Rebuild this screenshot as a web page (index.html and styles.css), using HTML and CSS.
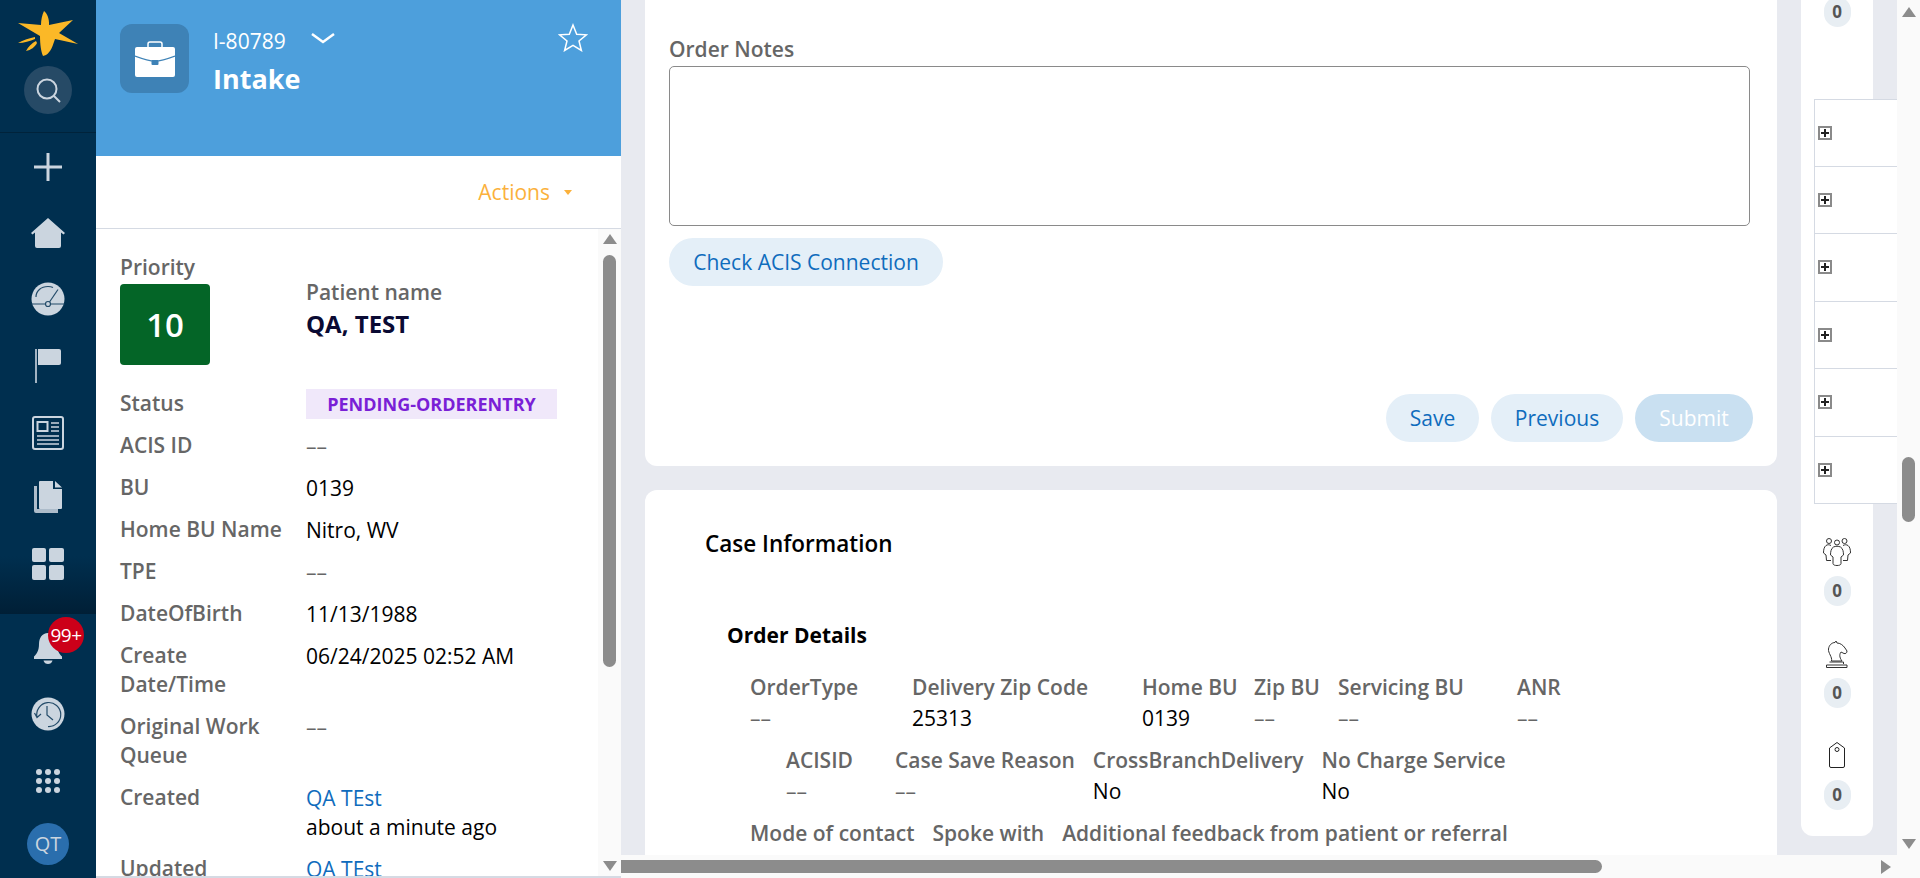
FILE: index.html
```html
<!DOCTYPE html>
<html lang="en">
<head>
	<meta charset="UTF-8">
	<title>Intake I-80789</title>
	<link rel="stylesheet" href="styles.css">
</head>
<body>
<div class="page">
	<nav class="rail">
		<div class="rail-top">
			<svg class="logo" width="60" height="46" viewBox="18 11 60 46"><path fill="#fbb827" d="M44 11C47 13 49.500 19 49 25L73 20L59 33L78 44L55 39C53 45 51 52 46 55L43 56C41 52 40 44 40 36L18 23L41 25C41 20 42 15 44 11Z"/><path fill="#fbb827" d="M18 43C23 40 30 38 35 37L35 39C30 41 24 43 18 43ZM26 51C28 47 32 43 36 41L37 43C35 47 31 50 26 51Z"/></svg>
			<div class="search-btn">
				<svg width="26" height="26" viewBox="0 0 26 26" fill="none" stroke="#cbd5df" stroke-width="2"><circle cx="12" cy="12" r="9.500"/><path d="M19 19L25 25"/></svg>
			</div>
		</div>
		<div class="rail-menu">
			<svg class="nav-icon" width="28" height="28" viewBox="0 0 28 28" fill="#cbd5df"><path d="M12.500 0h3v12.500H28v3H15.500V28h-3V15.500H0v-3h12.500z"/></svg>
			<svg class="nav-icon" width="34" height="30" viewBox="0 0 34 30" fill="#cbd5df"><path d="M17 0L34 15L32.500 16.500L30 14.500V28a2 2 0 0 1-2 2H6a2 2 0 0 1-2-2V14.500L1.500 16.500L0 15Z"/></svg>
			<svg class="nav-icon" width="34" height="34" viewBox="0 0 34 34"><circle cx="17" cy="17" r="16.500" fill="#cbd5df"/><path d="M5 15C5 9 10 4.500 17 4.500C19 4.500 21 5 22 5.500M0.500 22H14.500M19.500 22H33.500" fill="none" stroke="#234b69" stroke-width="1.200"/><path d="M18.500 20L27 7.500" stroke="#234b69" stroke-width="1.200"/><circle cx="17" cy="22" r="2.500" fill="#cbd5df" stroke="#234b69" stroke-width="1.200"/></svg>
			<svg class="nav-icon" width="26" height="34" viewBox="0 0 26 34" fill="#cbd5df"><rect x="0" y="0" width="2" height="34" opacity=".8"/><path d="M3 0H24a2 2 0 0 1 2 2V14a2 2 0 0 1-2 2H3Z"/></svg>
			<svg class="nav-icon" width="32" height="34" viewBox="0 0 32 34" fill="none" stroke="#cbd5df" stroke-width="2"><rect x="1" y="1" width="30" height="32" rx="2"/><rect x="5.500" y="6" width="10" height="9"/><path d="M19 7H27M19 11H27M19 15H27M5 20H27M5 24H27M5 28H27" stroke-width="1.500"/></svg>
			<svg class="nav-icon" width="28" height="32" viewBox="0 0 28 32" fill="#cbd5df"><path d="M0 5H3V28H24V32H2a2 2 0 0 1-2-2Z" opacity=".85"/><path d="M6 0H19V8H28V27a1 1 0 0 1-1 1H6a1 1 0 0 1-1-1V1a1 1 0 0 1 1-1Z"/><path d="M21 0L28 6.500H21Z"/></svg>
			<svg class="nav-icon" width="32" height="32" viewBox="0 0 32 32" fill="#cbd5df"><rect width="14" height="14" rx="2"/><rect x="17" width="15" height="14" rx="2"/><rect y="17" width="14" height="15" rx="2"/><rect x="17" y="17" width="15" height="15" rx="2"/></svg>
		</div>
		<div class="rail-bottom">
			<div class="bell-wrap">
				<svg width="28" height="31" viewBox="0 0 28 31" fill="#cbd5df"><path d="M14 0C20 0 23 5 23 11C23 17 25 21 28 23.500V26H0V23.500C3 21 5 17 5 11C5 5 8 0 14 0Z"/><path d="M9.500 27.500H18.500C18 30 16 31 14 31C12 31 10 30 9.500 27.500Z"/></svg>
				<span class="bell-badge">99+</span>
			</div>
			<svg class="history" width="34" height="34" viewBox="0 0 34 34"><circle cx="17" cy="17" r="16.500" fill="#cbd5df"/><path d="M6 20A12 12 0 1 1 17 29.500M3.500 16L6 20.500L10 17M16 9V18L22 23" fill="none" stroke="#234b69" stroke-width="1.200"/></svg>
			<div class="dots"><i></i><i></i><i></i><i></i><i></i><i></i><i></i><i></i><i></i></div>
			<div class="avatar">QT</div>
		</div>
	</nav>

	<aside class="panel">
		<header class="case-head">
			<div class="case-icon">
				<svg width="40" height="36" viewBox="0 0 40 36"><path d="M13 7V3a2 2 0 0 1 2-2H25a2 2 0 0 1 2 2V7" fill="none" stroke="#fff" stroke-width="1.500"/><rect y="6" width="40" height="30" rx="2" fill="#fff"/><path d="M0 15C8 18 14 20 20 20C26 20 32 18 40 15" fill="none" stroke="#3e82b6" stroke-width="1.200"/><rect x="16.500" y="19" width="7" height="5" rx="1" fill="#3e82b6"/></svg>
			</div>
			<div class="case-title">
				<div class="case-id-row">
					<span class="case-id">I-80789</span>
					<svg width="24" height="12" viewBox="0 0 24 12" fill="none" stroke="#fff" stroke-width="2.500"><path d="M1 2L12 10L23 2"/></svg>
				</div>
				<div class="case-name">Intake</div>
			</div>
			<svg class="star" width="30" height="29" viewBox="0 0 30 29" fill="none" stroke="#fff" stroke-width="1.500"><path d="M15 2L18.700 11.200L28.500 11.800L21 18L23.400 27.500L15 22.300L6.600 27.500L9 18L1.500 11.800L11.300 11.200Z"/></svg>
		</header>
		<div class="actions-bar">
			<span class="actions">Actions</span>
			<span class="caret"></span>
		</div>
		<div class="panel-body">
			<div class="details">
				<div class="top-block">
					<div class="priority">
						<div class="label">Priority</div>
						<div class="priority-box">10</div>
					</div>
					<div class="patient">
						<div class="label">Patient name</div>
						<div class="patient-name">QA, TEST</div>
					</div>
				</div>
				<div class="row row-status"><div class="label">Status</div><div class="status">PENDING-ORDERENTRY</div></div>
				<div class="row"><div class="label">ACIS ID</div><div class="value empty">––</div></div>
				<div class="row"><div class="label">BU</div><div class="value">0139</div></div>
				<div class="row"><div class="label">Home BU Name</div><div class="value">Nitro, WV</div></div>
				<div class="row"><div class="label">TPE</div><div class="value empty">––</div></div>
				<div class="row"><div class="label">DateOfBirth</div><div class="value">11/13/1988</div></div>
				<div class="row"><div class="label">Create<br>Date/Time</div><div class="value">06/24/2025 02:52 AM</div></div>
				<div class="row"><div class="label">Original Work<br>Queue</div><div class="value empty">––</div></div>
				<div class="row"><div class="label">Created</div><div class="value"><a class="link">QA TEst</a><br>about a minute ago</div></div>
				<div class="row"><div class="label">Updated</div><div class="value"><a class="link">QA TEst</a></div></div>
			</div>
			<div class="vbar vbar-panel">
				<span class="arrow-up"></span>
				<span class="thumb-v thumb-panel"></span>
				<span class="arrow-down"></span>
			</div>
		</div>
	</aside>

	<main class="main">
		<div class="main-left">
			<div class="view">
				<div class="content">
					<section class="card card-form">
						<div class="notes-label">Order Notes</div>
						<div class="notes"></div>
						<button class="btn btn-check">Check ACIS Connection</button>
						<div class="form-buttons">
							<button class="btn btn-save">Save</button>
							<button class="btn btn-prev">Previous</button>
							<button class="btn btn-submit">Submit</button>
						</div>
					</section>
					<section class="card card-case">
						<h2 class="case-info">Case Information</h2>
						<h3 class="order-details">Order Details</h3>
						<div class="fields">
							<div class="field w-order"><div class="f-label">OrderType</div><div class="f-value empty">––</div></div>
							<div class="field w-zip"><div class="f-label">Delivery Zip Code</div><div class="f-value">25313</div></div>
							<div class="field w-home"><div class="f-label">Home BU</div><div class="f-value">0139</div></div>
							<div class="field w-zipbu"><div class="f-label">Zip BU</div><div class="f-value empty">––</div></div>
							<div class="field w-serv"><div class="f-label">Servicing BU</div><div class="f-value empty">––</div></div>
							<div class="field"><div class="f-label">ANR</div><div class="f-value empty">––</div></div>
						</div>
						<div class="fields fields-inset">
							<div class="field w-acis"><div class="f-label">ACISID</div><div class="f-value empty">––</div></div>
							<div class="field"><div class="f-label">Case Save Reason</div><div class="f-value empty">––</div></div>
							<div class="field"><div class="f-label">CrossBranchDelivery</div><div class="f-value">No</div></div>
							<div class="field"><div class="f-label">No Charge Service</div><div class="f-value">No</div></div>
						</div>
						<div class="fields">
							<div class="field"><div class="f-label">Mode of contact</div></div>
							<div class="field"><div class="f-label">Spoke with</div></div>
							<div class="field"><div class="f-label">Additional feedback from patient or referral</div></div>
						</div>
					</section>
				</div>
				<aside class="side">
					<div class="count count-first">0</div>
					<div class="expand-list">
						<div class="expand-row"><span class="plus"></span></div>
						<div class="expand-row"><span class="plus"></span></div>
						<div class="expand-row"><span class="plus"></span></div>
						<div class="expand-row"><span class="plus"></span></div>
						<div class="expand-row"><span class="plus"></span></div>
						<div class="expand-row"><span class="plus"></span></div>
					</div>
					<svg class="side-icon people" width="28" height="28" viewBox="0 0 28 28" fill="none" stroke="#333" stroke-width="1"><circle cx="6" cy="3" r="2.500"/><circle cx="14" cy="4.500" r="2.500"/><circle cx="21.500" cy="3" r="2.500"/><path d="M8 7.500C6 6.500 4.500 6.500 3 7.500C1 9 .5 12 .5 15L3 17L3.500 22.500H8M20 7.500C22 6.500 23.500 6.500 25 7.500C27 9 27.500 12 27.500 15L25 17L24.500 22.500H20"/><path d="M10.500 9C12.500 8 15.500 8 17.500 9C20 10.500 20.500 14 20.500 17L18 19V25.500C18 27 16 27.500 14 27.500C12 27.500 10 27 10 25.500V19L7.500 17C7.500 14 8 10.500 10.500 9Z"/></svg>
					<div class="count">0</div>
					<svg class="side-icon knight" width="22" height="28" viewBox="0 0 22 28" fill="none" stroke="#333" stroke-width="1"><path d="M10 1L11 3C14 3 17 5 19 8L21 11C21 13 19.500 14 18 13.500L15 12C13.500 14 13 17 16 21H5.500C6.500 17 2 13 2.500 9C3 5 6 2.500 9 2.500Z"/><path d="M3.500 22H17.500V24M.5 25H21V27.500H.5Z"/></svg>
					<div class="count">0</div>
					<svg class="side-icon tag" width="16" height="26" viewBox="0 0 16 26" fill="none" stroke="#222" stroke-width="1"><path d="M8 .5L15.500 6V24a1.500 1.500 0 0 1-1.500 1.500H2A1.500 1.500 0 0 1 .5 24V6Z"/><circle cx="8" cy="7.500" r="2"/></svg>
					<div class="count">0</div>
				</aside>
			</div>
			<div class="hbar">
				<span class="thumb-h"></span>
				<span class="arrow-right"></span>
			</div>
		</div>
		<div class="vbar vbar-main">
			<span class="arrow-up"></span>
			<span class="thumb-v thumb-main"></span>
			<span class="arrow-down"></span>
		</div>
	</main>
</div>
</body>
</html>
```

FILE: styles.css
```css
* {
	box-sizing: border-box;
}
html, body {
	margin: 0;
	height: 100%;
	overflow: hidden;
}
body {
	font-family: "Open Sans", "Noto Sans", sans-serif;
	font-size: 21px;
	line-height: 29px;
	color: #000;
	background: #fff;
}
svg {
	display: block;
	flex: none;
}
.page {
	display: flex;
	width: 1920px;
	height: 878px;
}

/* left nav */
.rail {
	width: 96px;
	flex: none;
	display: flex;
	flex-direction: column;
	background: #002f4f;
}
.rail-top {
	height: 133px;
	display: flex;
	flex-direction: column;
	align-items: center;
	padding-top: 11px;
	border-bottom: 1px solid #00233b;
}
.search-btn {
	width: 48px;
	height: 48px;
	margin-top: 9px;
	border-radius: 50%;
	background: #264a66;
	display: flex;
	align-items: center;
	justify-content: center;
}
.rail-menu {
	height: 481px;
	display: flex;
	flex-direction: column;
	align-items: center;
	background: linear-gradient(#002f4f 88%, #001f36);
	padding-top: 20px;
}
.nav-icon:nth-child(1) {
	margin-bottom: 37px;
}
.nav-icon:nth-child(2) {
	margin-bottom: 34px;
}
.nav-icon:nth-child(3),
.nav-icon:nth-child(4) {
	margin-bottom: 33px;
}
.nav-icon:nth-child(5) {
	margin-bottom: 31px;
}
.nav-icon:nth-child(6) {
	margin-bottom: 35px;
}
.rail-bottom {
	flex: 1;
	display: flex;
	flex-direction: column;
	align-items: center;
	padding-top: 19px;
}
.bell-wrap {
	position: relative;
	width: 28px;
	height: 31px;
}
.bell-badge {
	position: absolute;
	left: 14px;
	top: -16px;
	width: 36px;
	height: 36px;
	border-radius: 50%;
	background: #cc0019;
	color: #fff;
	font-size: 19px;
	line-height: 36px;
	text-align: center;
	letter-spacing: -0.5px;
}
.history {
	margin-top: 33px;
}
.dots {
	margin-top: 38px;
	width: 24px;
	display: grid;
	grid-template-columns: repeat(3, 6px);
	gap: 3px;
}
.dots i {
	width: 6px;
	height: 6px;
	border-radius: 50%;
	background: #cbd5df;
}
.avatar {
	margin-top: 30px;
	width: 42px;
	height: 42px;
	border-radius: 50%;
	background: #2a6ead;
	color: #cbd5df;
	font-size: 20px;
	line-height: 42px;
	text-align: center;
}

/* case panel */
.panel {
	width: 525px;
	flex: none;
	display: flex;
	flex-direction: column;
	border-bottom: 2px solid #d5dae3;
}
.case-head {
	height: 156px;
	flex: none;
	display: flex;
	background: #4d9fdc;
	padding: 24px 33px 0 24px;
	color: #fff;
}
.case-icon {
	width: 69px;
	height: 69px;
	border-radius: 12px;
	background: #3e82b6;
	display: flex;
	align-items: center;
	justify-content: center;
}
.case-title {
	margin-left: 24px;
	flex: 1;
}
.case-id-row {
	display: flex;
	align-items: flex-start;
	gap: 25px;
	line-height: 28px;
	margin-top: 3px;
}
.case-id {
	font-size: 21px;
}
.case-id-row svg {
	margin-top: 5px;
}
.case-name {
	font-size: 27px;
	font-weight: 700;
	line-height: 36px;
	margin-top: 6px;
}
.star {
	margin-top: -1px;
}
.actions-bar {
	height: 73px;
	flex: none;
	display: flex;
	align-items: center;
	justify-content: flex-end;
	padding: 0 49px 0 0;
	border-bottom: 1px solid #d5dae3;
}
.actions {
	color: #fbb13c;
	font-size: 21px;
}
.caret {
	margin-left: 14px;
	border-top: 5px solid #fbb13c;
	border-left: 4px solid transparent;
	border-right: 4px solid transparent;
}
.panel-body {
	flex: 1;
	min-height: 0;
	display: flex;
	overflow: hidden;
}
.details {
	flex: 1;
	padding: 24px 0 0 24px;
	overflow: hidden;
}
.label {
	color: #666;
	font-weight: 600;
}
.top-block {
	display: flex;
}
.priority {
	width: 186px;
	flex: none;
}
.priority-box {
	width: 90px;
	height: 81px;
	margin-top: 2px;
	border-radius: 4px;
	background: #046527;
	color: #fff;
	font-size: 33px;
	font-weight: 600;
	line-height: 81px;
	text-align: center;
}
.patient {
	padding-top: 25px;
}
.patient-name {
	font-size: 24px;
	font-weight: 700;
	color: #0a0a33;
	line-height: 32px;
	margin-top: 1px;
}
.row {
	display: flex;
	margin-top: 13px;
}
.row-status {
	margin-top: 23px;
	align-items: center;
	height: 30px;
}
.row .label {
	width: 186px;
	flex: none;
}
.value {
	padding-top: 1px;
	margin-bottom: -1px;
}
.empty {
	color: #666;
}
.link {
	color: #0f6cbd;
}
.status {
	width: 251px;
	height: 30px;
	margin-top: 1px;
	margin-bottom: -1px;
	background: #f0e8fa;
	color: #7a1fd6;
	font-size: 18px;
	font-weight: 700;
	line-height: 30px;
	text-align: center;
}

/* scrollbars */
.vbar {
	flex: none;
	width: 23px;
	display: flex;
	flex-direction: column;
	align-items: center;
	background: #fafafa;
}
.vbar-panel {
	padding: 5px 0 5px;
}
.vbar-main {
	padding: 7px 0 29px;
}
.arrow-up {
	border-bottom: 10px solid #8c8c8c;
	border-left: 7.500px solid transparent;
	border-right: 7.500px solid transparent;
}
.arrow-down {
	margin-top: auto;
	border-top: 10px solid #8c8c8c;
	border-left: 7.500px solid transparent;
	border-right: 7.500px solid transparent;
}
.thumb-v {
	width: 13px;
	border-radius: 7px;
	background: #8c8c8c;
}
.thumb-panel {
	height: 412px;
	margin-top: 11px;
}
.thumb-main {
	height: 65px;
	margin-top: 440px;
}
.hbar {
	height: 23px;
	flex: none;
	display: flex;
	align-items: center;
	background: #fafafa;
}
.thumb-h {
	width: 981px;
	height: 13px;
	border-radius: 0 7px 7px 0;
	background: #8c8c8c;
}
.arrow-right {
	margin-left: auto;
	margin-right: 6px;
	border-left: 10px solid #8c8c8c;
	border-top: 7px solid transparent;
	border-bottom: 7px solid transparent;
}

/* main area */
.main {
	flex: 1;
	display: flex;
	min-width: 0;
}
.main-left {
	flex: 1;
	display: flex;
	flex-direction: column;
	min-width: 0;
}
.view {
	flex: 1;
	min-height: 0;
	display: flex;
	overflow: hidden;
	background: #e8eaf0;
	padding-left: 24px;
}
.content {
	width: 1132px;
	flex: none;
}
.card {
	background: #fff;
	border-radius: 12px;
}
.card-form {
	height: 466px;
	padding: 35px 0 0 24px;
	border-radius: 0 0 12px 12px;
}
.notes-label {
	color: #666;
	font-weight: 600;
	line-height: 29px;
}
.notes {
	width: 1081px;
	height: 160px;
	margin-top: 2px;
	border: 1px solid #8a8a8a;
	border-radius: 5px;
}
.btn {
	height: 48px;
	border: 0;
	border-radius: 24px;
	background: #e4eff8;
	color: #0f6cbd;
	font-family: inherit;
	font-size: 21px;
	padding: 0;
}
.btn-check {
	display: block;
	width: 274px;
	margin-top: 12px;
}
.form-buttons {
	display: flex;
	gap: 12px;
	margin-top: 108px;
	margin-left: 717px;
}
.btn-save {
	width: 93px;
}
.btn-prev {
	width: 132px;
}
.btn-submit {
	width: 118px;
	background: #c9e0f1;
	color: #fff;
}
.card-case {
	height: 500px;
	margin-top: 24px;
	padding: 37px 0 0 60px;
}
.case-info {
	margin: 0;
	font-size: 22.500px;
	font-weight: 600;
	line-height: 34px;
}
.order-details {
	margin: 59px 0 0 22px;
	font-size: 21px;
	font-weight: 700;
	line-height: 30px;
}
.fields {
	display: flex;
	gap: 18px;
	margin: 23px 0 0 45px;
}
.fields + .fields {
	margin-top: 12px;
}
.fields-inset {
	margin-left: 81px;
}
.f-label {
	color: #666;
	font-weight: 600;
	white-space: nowrap;
}
.f-value {
	line-height: 32px;
}
.w-order {
	width: 144px;
}
.w-zip {
	width: 212px;
}
.w-home {
	width: 94px;
}
.w-zipbu {
	width: 66px;
}
.w-serv {
	width: 161px;
}
.w-acis {
	width: 91px;
}

/* right side column */
.side {
	width: 72px;
	height: 836px;
	flex: none;
	margin-left: 24px;
	background: #fff;
	border-radius: 0 0 12px 12px;
	display: flex;
	flex-direction: column;
}
.count {
	width: 27px;
	height: 30px;
	margin: 0 auto;
	border-radius: 14px;
	background: #e8eef3;
	color: #555;
	font-size: 17px;
	font-weight: 700;
	line-height: 30px;
	text-align: center;
}
.count-first {
	margin-top: -3px;
	flex: none;
}
.expand-list {
	flex: none;
	width: 83px;
	margin: 72px 0 0 13px;
	background: #fff;
	border-top: 1px solid #d5dae3;
	border-left: 1px solid #d5dae3;
}
.expand-row {
	height: 67.500px;
	display: flex;
	align-items: center;
	padding-left: 3px;
	border-bottom: 1px solid #d5dae3;
}
.expand-row:first-child {
	height: 66.500px;
}
.plus {
	position: relative;
	width: 14px;
	height: 14px;
	border: 2px solid #8a8a8a;
	background: #fff;
}
.plus::before,
.plus::after {
	content: "";
	position: absolute;
	background: #222;
}
.plus::before {
	left: 1px;
	top: 4px;
	width: 8px;
	height: 2px;
}
.plus::after {
	left: 4px;
	top: 1px;
	width: 2px;
	height: 8px;
}
.side-icon {
	margin-left: auto;
	margin-right: auto;
}
.people {
	margin-top: 34px;
	margin-bottom: 10px;
}
.knight {
	margin-top: 34px;
	margin-bottom: 10px;
}
.tag {
	margin-top: 34px;
	margin-bottom: 12px;
}
```
